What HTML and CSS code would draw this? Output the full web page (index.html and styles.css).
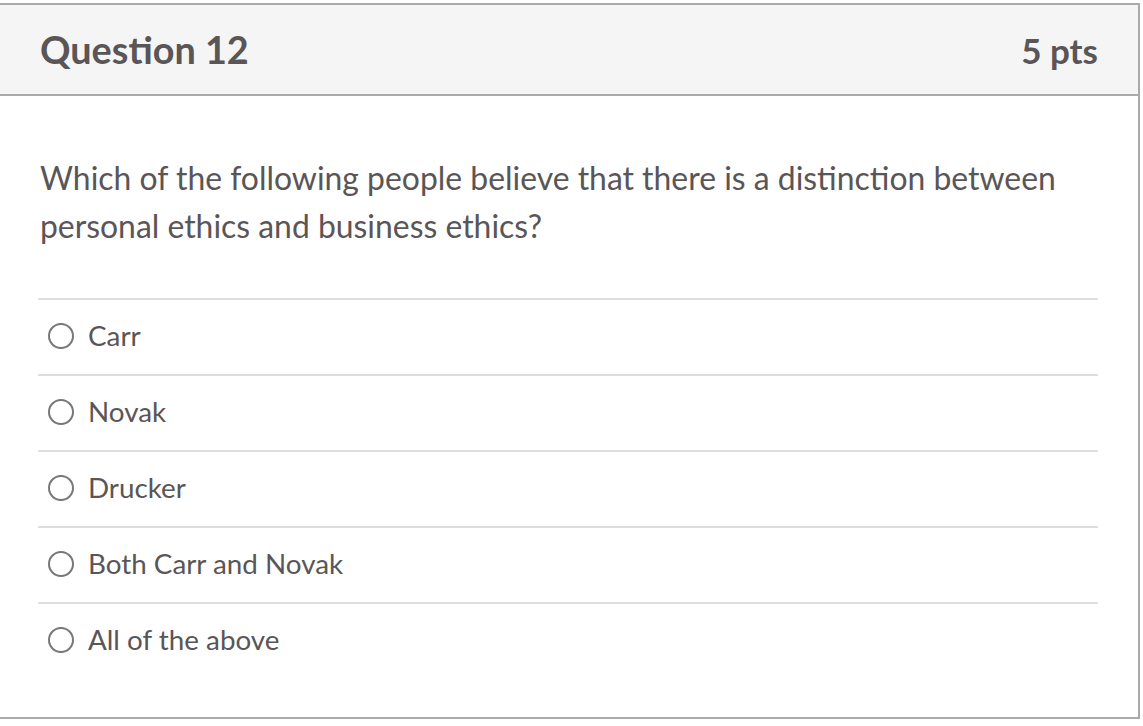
FILE: index.html
```html
<!DOCTYPE html>
<html>
<head>
<meta charset="utf-8">
<link rel="stylesheet" href="styles.css">
</head>
<body>
<div class="card">
  <div class="header">
    <span class="title">Question 12</span>
    <span class="pts">5 pts</span>
  </div>
  <div class="content">
    <p class="qtext">Which of the following people believe that there is a distinction between personal ethics and business ethics?</p>
    <div class="answers">
      <div class="answer"><span class="radio"></span><span class="label">Carr</span></div>
      <div class="answer"><span class="radio"></span><span class="label">Novak</span></div>
      <div class="answer"><span class="radio"></span><span class="label">Drucker</span></div>
      <div class="answer"><span class="radio"></span><span class="label">Both Carr and Novak</span></div>
      <div class="answer"><span class="radio"></span><span class="label">All of the above</span></div>
    </div>
  </div>
</div>
</body>
</html>
```
FILE: styles.css
```css
html, body {
  margin: 0;
  padding: 0;
  background: #ffffff;
}
body {
  font-family: Lato, "Open Sans", sans-serif;
  color: #5a5556;
  overflow: hidden;
}
.card {
  margin: 3px 3px 0 -2px;
  border: 2px solid #aaaaaa;
  height: 716px;
  box-sizing: border-box;
  display: flex;
  flex-direction: column;
}
.header {
  height: 89px;
  background: #f5f5f5;
  border-bottom: 2px solid #aaaaaa;
  display: flex;
  align-items: center;
  justify-content: space-between;
  padding: 0 40px 0 40px;
  flex-shrink: 0;
}
.title {
  font-weight: 700;
  font-size: 37.8px;
}
.pts {
  font-weight: 700;
  font-size: 35px;
}
.content {
  padding: 58px 40px 0 38px;
}
.qtext {
  margin: 0 0 0 2px;
  font-size: 31.9px;
  line-height: 48px;
}
.answers {
  margin-top: 48px;
}
.answer {
  box-sizing: border-box;
  border-top: 2px solid #dddddd;
  height: 76px;
  display: flex;
  align-items: center;
  padding: 0 0 3px 10px;
}
.radio {
  width: 22px;
  height: 22px;
  border: 2px solid #777777;
  border-radius: 50%;
  flex-shrink: 0;
}
.label {
  font-size: 27.8px;
  margin-left: 14px;
}
```
